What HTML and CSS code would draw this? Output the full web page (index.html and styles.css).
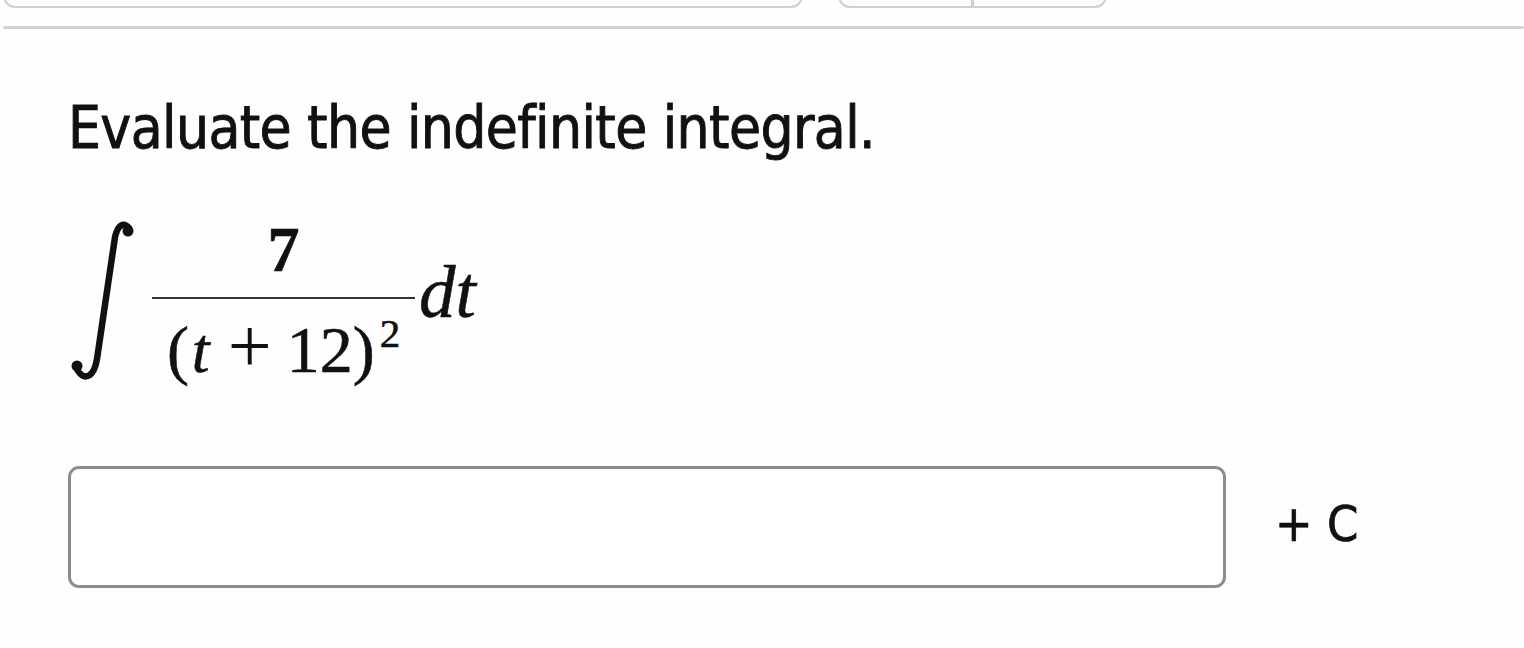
FILE: index.html
```html
<!DOCTYPE html>
<html>
<head>
<meta charset="utf-8">
<link rel="stylesheet" href="styles.css">
</head>
<body>
<div class="toolbar">
  <div class="tab tab-wide"></div>
  <div class="tab tab-split"><span class="half"></span><span class="half"></span></div>
</div>
<div class="rule"></div>
<main class="question">
  <p class="prompt">Evaluate the indefinite integral.</p>
  <div class="math">
    <svg class="integral" width="70" height="162" viewBox="0 0 70 162">
      <path d="M61 7 C56 1 50 3 47 16 L29 138 C26 156 17 160 10 150" fill="none" stroke="#111" stroke-width="6.5" stroke-linecap="round"/>
      <circle cx="60" cy="10" r="5.5" fill="#111"/>
      <circle cx="9" cy="145" r="5.5" fill="#111"/>
    </svg>
    <div class="frac">
      <div class="num">7</div>
      <div class="bar"></div>
      <div class="den">(<i>t</i><span class="plus">+</span>12)<sup>2</sup></div>
    </div>
    <div class="dt"><i>dt</i></div>
  </div>
  <div class="answer">
    <div class="field"></div>
    <span class="plusc">+ C</span>
  </div>
</main>
</body>
</html>
```
FILE: styles.css
```css
html, body {
  margin: 0;
  padding: 0;
  background: #fefefe;
}
body {
  font-family: "DejaVu Sans Condensed", "DejaVu Sans", sans-serif;
  color: #111;
  width: 1524px;
  height: 648px;
  overflow: hidden;
}
.toolbar {
  display: flex;
  height: 9px;
  overflow: hidden;
  padding-left: 3px;
}
.tab {
  height: 30px;
  margin-top: -22px;
  border: 2px solid #cfcfcf;
  border-radius: 0 0 12px 12px;
  box-sizing: border-box;
  background: #fcfcfc;
}
.tab-wide {
  width: 800px;
}
.tab-split {
  width: 269px;
  margin-left: 35px;
  display: flex;
}
.tab-split .half {
  flex: 1;
}
.tab-split .half:first-child {
  border-right: 3px solid #cfcfcf;
}
.rule {
  margin: 17px 0 0 3px;
  height: 3px;
  background: #d2d2d2;
  border-radius: 2px;
}
.question {
  padding-left: 68px;
}
.prompt {
  margin: 70px 0 0 0;
  font-size: 58px;
  line-height: 58px;
  letter-spacing: -0.6px;
  -webkit-text-stroke: 0.9px #111;
}
.math {
  display: flex;
  align-items: center;
  margin-top: 60px;
  height: 170px;
  font-family: "Liberation Serif", "DejaVu Serif", serif;
  -webkit-text-stroke: 0.6px #111;
}
.integral {
  margin-right: 14px;
}
.frac {
  display: flex;
  flex-direction: column;
  align-items: center;
  width: 263px;
  margin-top: 10px;
}
.num {
  font-size: 64px;
  line-height: 64px;
  font-weight: bold;
  margin-bottom: 15px;
  margin-top: -11px;
}
.bar {
  width: 100%;
  height: 2px;
  background: #333;
}
.den {
  font-size: 66px;
  line-height: 70px;
  white-space: nowrap;
  margin-top: -1px;
}
.den i {
  font-size: 64px;
  margin: 0 3px;
}
.den .plus {
  margin: 0 15px;
  font-size: 78px;
  -webkit-text-stroke: 0;
}
.den sup {
  font-size: 41px;
  vertical-align: 25px;
  margin-left: 5px;
}
.dt {
  font-size: 73px;
  margin: 0 0 18px 4px;
}
.answer {
  display: flex;
  align-items: center;
  margin-top: 79px;
}
.field {
  width: 1158px;
  height: 122px;
  box-sizing: border-box;
  border: 3px solid #8c8c8c;
  border-radius: 11px;
  background: #fff;
}
.plusc {
  font-size: 50px;
  margin-left: 49px;
  margin-top: -6px;
  -webkit-text-stroke: 0.7px #111;
}
```
